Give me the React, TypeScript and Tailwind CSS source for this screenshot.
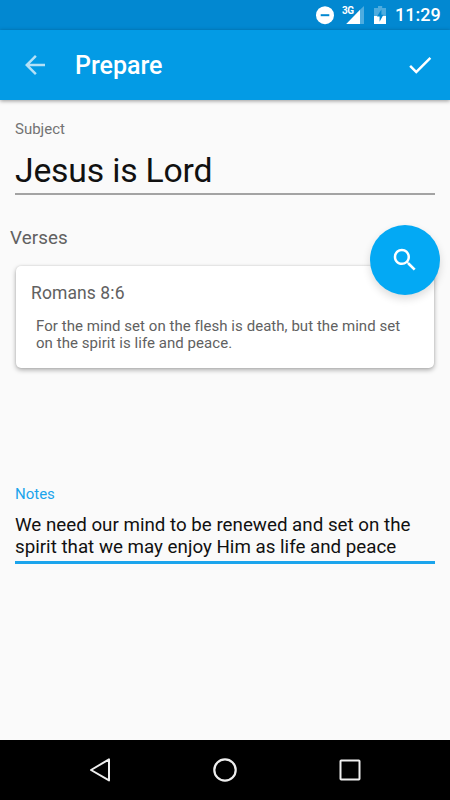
const verses = [
  {
    reference: 'Romans 8:6',
    lines: ['For the mind set on the flesh is death, but the mind set', 'on the spirit is life and peace.'],
  },
];

const notes = ['We need our mind to be renewed and set on the', 'spirit that we may enjoy Him as life and peace'];

function StatusBar() {
  return (
    <div className="flex h-[30px] shrink-0 items-center justify-end bg-[#0288d1] pr-[10px] text-white">
      <svg width="18" height="30" viewBox="0 0 18 30">
        <circle cx="9" cy="15.2" r="9" fill="#fff" />
        <path d="M4.7 15.2h8.6" stroke="#0288d1" strokeWidth="2" />
      </svg>
      <div className="relative ml-[8px] h-[30px] w-[22px]">
        <svg width="22" height="30" viewBox="0 0 22 30">
          <path d="M18 9.8 22 6v18h-4z" fill="#fff" fillOpacity="0.3" />
          <path d="M4.2 24 18 9.8V24z" fill="#fff" />
        </svg>
        <span className="absolute left-0 top-[5px] text-[10px] leading-[11px] font-bold tracking-[-0.6px]">3G</span>
      </div>
      <svg className="ml-[10px]" width="12" height="30" viewBox="0 0 12 30">
        <path d="M4 6h4.2v2H12v8H0V8h4z" fill="#fff" fillOpacity="0.3" />
        <path d="M0 16h12v8H0z" fill="#fff" />
        <path d="M7.4 9.5 3 16.4H5.6V21.8l3.8-7H7.4z" fill="#0288d1" />
      </svg>
      <span className="ml-[9px] w-[45px] text-[18px] leading-[30px] font-medium whitespace-nowrap">11:29</span>
    </div>
  );
}

function Toolbar() {
  return (
    <header className="relative z-10 flex h-[70px] shrink-0 items-center bg-[#039be5] px-[15px] text-white shadow-[0_1px_4px_rgba(0,0,0,0.4)]">
      <button className="ml-[5px] opacity-70">
        <svg width="30" height="30" viewBox="0 0 24 24" fill="currentColor">
          <path d="M20 11H7.83l5.59-5.59L12 4l-8 8 8 8 1.41-1.41L7.83 13H20v-2z" />
        </svg>
      </button>
      <h1 className="ml-[25px] pt-[2px] text-[25px] leading-[30px] font-medium">Prepare</h1>
      <button className="ml-auto">
        <svg width="30" height="30" viewBox="0 0 24 24" fill="currentColor">
          <path d="M9 16.2L4.8 12l-1.4 1.4L9 19 21 7l-1.4-1.4L9 16.2z" />
        </svg>
      </button>
    </header>
  );
}

function VerseCard({ reference, lines }: { reference: string; lines: string[] }) {
  return (
    <div className="h-[102px] rounded-[5px] bg-white px-[15px] pt-[16px] shadow-[0_2px_5px_rgba(0,0,0,0.32),0_0_2px_rgba(0,0,0,0.12)]">
      <h3 className="text-[17.5px] leading-[22px] tracking-[0.1px] text-[#616161]">{reference}</h3>
      <p className="mt-[14px] pl-[5px] text-[15px] leading-[17px] tracking-[0.05px] whitespace-nowrap text-[#616161]">
        {lines.map((line) => (
          <span key={line} className="block">{line}</span>
        ))}
      </p>
    </div>
  );
}

function NavigationBar() {
  return (
    <nav className="flex h-[60px] shrink-0 items-center justify-between bg-black px-[85px]">
      <svg width="30" height="30" viewBox="0 0 30 30" fill="none" stroke="#eee" strokeWidth="2" strokeLinejoin="round">
        <path d="M24 4.4v21L6 15z" />
      </svg>
      <svg width="30" height="30" viewBox="0 0 30 30" fill="none" stroke="#eee" strokeWidth="2.2">
        <circle cx="15" cy="15" r="10.7" />
      </svg>
      <svg width="30" height="30" viewBox="0 0 30 30" fill="none" stroke="#eee" strokeWidth="2">
        <rect x="5.5" y="5.5" width="19" height="19" rx="0.7" />
      </svg>
    </nav>
  );
}

export default function App() {
  return (
    <div className="flex h-[800px] w-[450px] flex-col overflow-hidden bg-[#fafafa] font-[Roboto,sans-serif]">
      <StatusBar />
      <Toolbar />
      <main className="flex-1">
        <section className="px-[15px] pt-[20px]">
          <label className="block text-[15px] leading-[18px] text-[#737373]">Subject</label>
          <div className="mt-[10px] h-[47px] border-b-2 border-[#a3a3a3] text-[33.75px] leading-[45px] tracking-[-0.2px] text-[#111]">
            Jesus is Lord
          </div>
        </section>

        <section className="relative h-[290px] pt-[31px]">
          <h2 className="pl-[10px] text-[18.75px] leading-[24px] tracking-[0.1px] text-[#616161]">Verses</h2>
          <div className="mt-[16px] px-[16px]">
            {verses.map((verse) => (
              <VerseCard key={verse.reference} {...verse} />
            ))}
          </div>
          <button className="absolute top-[29.5px] right-[10px] flex size-[70px] items-center justify-center rounded-full bg-[#03a9f4] text-white shadow-[0_4px_8px_rgba(0,0,0,0.14)]">
            <svg width="30" height="30" viewBox="0 0 24 24" fill="currentColor">
              <path d="M15.5 14h-.79l-.28-.27C15.41 12.59 16 11.11 16 9.5 16 5.91 13.09 3 9.5 3S3 5.91 3 9.5 5.91 16 9.5 16c1.61 0 3.09-.59 4.23-1.57l.27.28v.79l5 4.99L20.49 19l-4.99-5zm-6 0C7.01 14 5 11.99 5 9.5S7.01 5 9.5 5 14 7.01 14 9.5 11.99 14 9.5 14z" />
            </svg>
          </button>
        </section>

        <section className="px-[15px]">
          <label className="block text-[15px] leading-[18px] text-[#1ba4ec]">Notes</label>
          <div className="mt-[11px] border-b-3 border-[#1ba4ec] pb-[3px] text-[18.75px] leading-[22px] whitespace-nowrap text-[#111]">
            {notes.map((line) => (
              <span key={line} className="block">{line}</span>
            ))}
          </div>
        </section>
      </main>
      <NavigationBar />
    </div>
  );
}
